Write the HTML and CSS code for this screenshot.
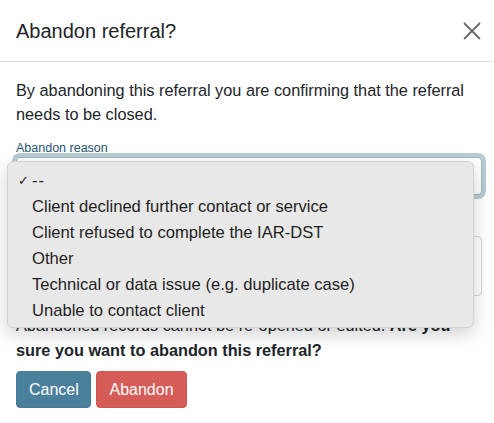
FILE: index.html
```html
<!DOCTYPE html>
<html>
<head>
<meta charset="utf-8">
<link rel="stylesheet" href="styles.css">
</head>
<body>
<div class="modal">
  <div class="modal-header">
    <h5 class="modal-title">Abandon referral?</h5>
    <button class="close" aria-label="Close">
      <svg width="18" height="18" viewBox="0 0 18 18"><path d="M1 1 L17 17 M17 1 L1 17" stroke="#6b6b6b" stroke-width="1.8" fill="none"/></svg>
    </button>
  </div>
  <div class="modal-body">
    <p class="intro">By abandoning this referral you are confirming that the referral needs to be closed.</p>
    <div class="field">
      <label class="label">Abandon reason</label>
      <div class="select-wrap">
        <div class="select"></div>
        <ul class="dropdown">
          <li class="opt selected"><span class="check">✓</span>--</li>
          <li class="opt">Client declined further contact or service</li>
          <li class="opt">Client refused to complete the IAR-DST</li>
          <li class="opt">Other</li>
          <li class="opt">Technical or data issue (e.g. duplicate case)</li>
          <li class="opt">Unable to contact client</li>
        </ul>
      </div>
    </div>
    <div class="field">
      <label class="label">Notes</label>
      <div class="textarea"></div>
    </div>
    <p class="warning">Abandoned records cannot be re-opened or edited. <strong>Are you sure you want to abandon this referral?</strong></p>
    <div class="actions">
      <button class="btn btn-cancel">Cancel</button>
      <button class="btn btn-abandon">Abandon</button>
    </div>
  </div>
</div>
</body>
</html>
```
FILE: styles.css
```css
html, body {
  margin: 0;
  padding: 0;
  background: #ffffff;
}
body {
  font-family: "Liberation Sans", Arial, sans-serif;
  color: #212529;
  font-size: 16.3px;
  line-height: 24px;
}
.modal {
  width: 494px;
  height: 423px;
  background: #fff;
  overflow: hidden;
}
.modal-header {
  display: flex;
  align-items: center;
  justify-content: space-between;
  padding: 0 12px 0 16px;
  border-bottom: 1px solid #dee2e6;
  box-sizing: border-box;
  height: 62px;
}
.modal-title {
  margin: 0;
  font-size: 20px;
  font-weight: 400;
  line-height: 30px;
  color: #212529;
}
.close {
  border: 0;
  background: none;
  padding: 0;
  width: 20px;
  height: 20px;
  display: flex;
  align-items: center;
  justify-content: center;
}
.modal-body {
  padding: 16px 12px 16px 16px;
}
.intro {
  margin: 0 0 16px 0;
}
.label {
  display: block;
  font-size: 12.5px;
  line-height: 12px;
  color: #2a5570;
  margin: 0 0 3px 0;
}
.select-wrap {
  position: relative;
  height: 38px;
}
.select {
  height: 38px;
  box-sizing: border-box;
  border: 1px solid #9fb8c2;
  border-radius: 4px;
  background: #fff;
  box-shadow: 0 0 0 4px #b9cbd2;
}
.dropdown {
  position: absolute;
  left: -9px;
  top: 4px;
  width: 467px;
  margin: 0;
  padding: 6px 0 4px 0;
  list-style: none;
  background: #e8e8e8;
  border: 1px solid #d2d2d2;
  border-radius: 6px;
  box-shadow: 0 6px 18px rgba(0, 0, 0, 0.18);
  z-index: 10;
  box-sizing: border-box;
  height: 167px;
}
.opt {
  height: 26px;
  line-height: 26px;
  padding-left: 24px;
  font-size: 16.6px;
  color: #1e1e1e;
  position: relative;
  white-space: nowrap;
}
.check {
  position: absolute;
  left: 10px;
  font-size: 13px;
}
.selected {
  letter-spacing: 1px;
}
.field + .field {
  margin-top: 26px;
}
.field + .field .label {
  visibility: hidden;
}
.textarea {
  height: 60px;
  box-sizing: border-box;
  border: 1px solid #ced4da;
  border-radius: 4px;
  background: #fff;
}
.warning {
  margin: 17px 0 8px 0;
  line-height: 25px;
}
.warning strong {
  font-weight: 700;
}
.actions {
  display: flex;
  gap: 5px;
}
.btn {
  font-family: "Liberation Sans", Arial, sans-serif;
  font-size: 16px;
  line-height: 24px;
  color: #fff;
  border: 1px solid transparent;
  border-radius: 4px;
  padding: 6px 12px;
  height: 37px;
}
.btn-cancel {
  background: #4b809d;
  border-color: #477a96;
  width: 75px;
}
.btn-abandon {
  background: #d65c58;
  border-color: #d15551;
  width: 91px;
}
```
